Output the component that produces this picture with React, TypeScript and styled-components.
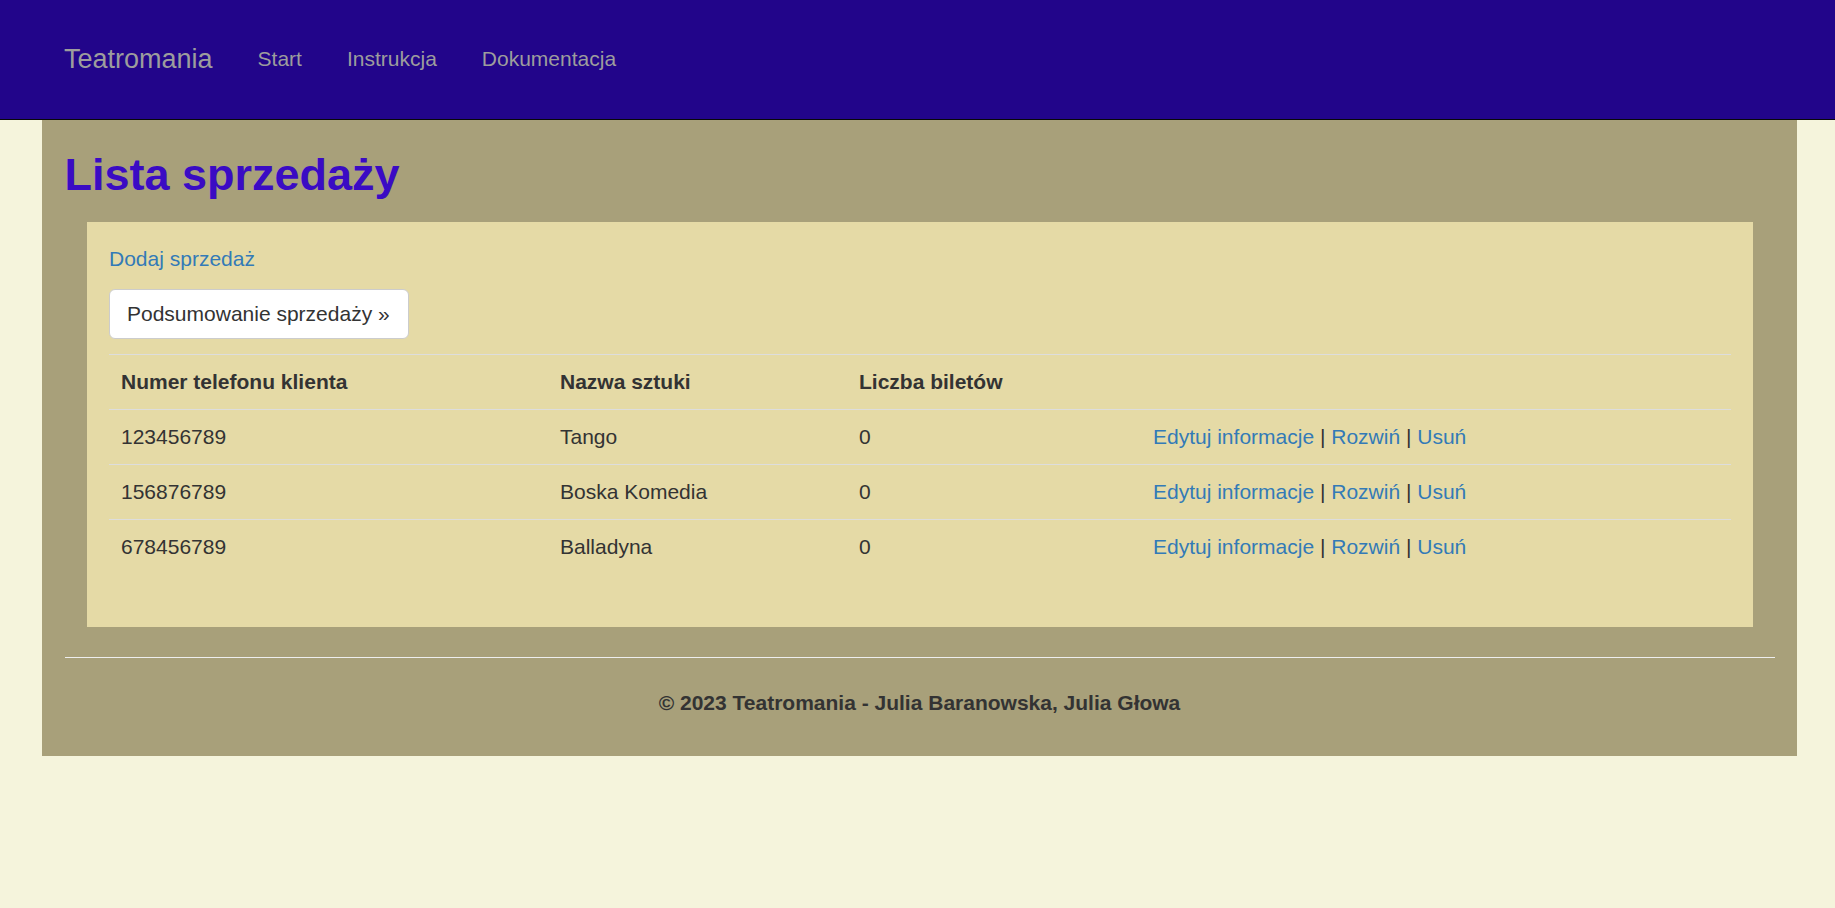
import React from "react";
import styled, { createGlobalStyle } from "styled-components";

const GlobalStyle = createGlobalStyle`
  html, body {
    margin: 0;
    padding: 0;
    background: #f5f4dc;
    font-family: Arial, "Liberation Sans", Helvetica, sans-serif;
    font-size: 21px;
    line-height: 30px;
    color: #333333;
  }
  * { box-sizing: border-box; }
`;

const NavBar = styled.nav`
  height: 120px;
  background: #22058a;
  border-bottom: 1px solid #080808;
  display: flex;
  align-items: center;
  padding: 0 0 2px 41.5px;
`;

const Brand = styled.a`
  font-size: 27px;
  color: #9d9d9d;
  padding: 0 22.5px;
  text-decoration: none;
`;

const NavLink = styled.a`
  font-size: 21px;
  color: #9d9d9d;
  padding: 0 22.5px;
  text-decoration: none;
`;

const Container = styled.main`
  width: 1755px;
  margin: 0 0 0 42px;
  background: #a8a07a;
  padding: 30px 22.5px 38px;
`;

const Title = styled.h1`
  margin: 0 0 22px;
  font-size: 45px;
  line-height: 49.5px;
  font-weight: bold;
  color: #3a0bc4;
`;

const Panel = styled.section`
  margin: 0 22px 0 22px;
  background: #e5daa6;
  padding: 22.5px 22px 22.5px 22.5px;
`;

const Para = styled.p`
  margin: 0 0 15px;
`;

const Link = styled.a`
  color: #337ab7;
  text-decoration: none;
`;

const Button = styled.a`
  display: inline-block;
  height: 50px;
  padding: 9px 18px 9px 17px;
  border: 1px solid #cccccc;
  border-radius: 6px;
  background: #ffffff;
  color: #333333;
  font-size: 21px;
  line-height: 30px;
  text-decoration: none;
`;

const Table = styled.table`
  width: 100%;
  border-collapse: collapse;
  border-spacing: 0;
  margin-bottom: 30px;
`;

const HeadCell = styled.th<{ $w?: number }>`
  text-align: left;
  font-weight: bold;
  padding: 12px;
  border-top: 1px solid #dddddd;
  ${(p) => (p.$w ? `width: ${p.$w}px;` : "")}
`;

const Cell = styled.td`
  padding: 12px;
  border-top: 1px solid #dddddd;
`;

const Sep = styled.span`
  color: #333333;
`;

const Rule = styled.hr`
  margin: 30px 0;
  border: 0;
  border-top: 1px solid #eeeeee;
`;

const Footer = styled.footer`
  text-align: center;
  font-weight: bold;
`;

const rows = [
  { phone: "123456789", play: "Tango", count: "0" },
  { phone: "156876789", play: "Boska Komedia", count: "0" },
  { phone: "678456789", play: "Balladyna", count: "0" },
];

export default function App() {
  return (
    <>
      <GlobalStyle />
      <NavBar>
        <Brand href="#">Teatromania</Brand>
        <NavLink href="#">Start</NavLink>
        <NavLink href="#">Instrukcja</NavLink>
        <NavLink href="#">Dokumentacja</NavLink>
      </NavBar>
      <Container>
        <Title>Lista sprzedaży</Title>
        <Panel>
          <Para>
            <Link href="#">Dodaj sprzedaż</Link>
          </Para>
          <Para>
            <Button href="#">Podsumowanie sprzedaży »</Button>
          </Para>
          <Table>
            <thead>
              <tr>
                <HeadCell $w={439}>Numer telefonu klienta</HeadCell>
                <HeadCell $w={299}>Nazwa sztuki</HeadCell>
                <HeadCell $w={294}>Liczba biletów</HeadCell>
                <HeadCell></HeadCell>
              </tr>
            </thead>
            <tbody>
              {rows.map((r) => (
                <tr key={r.phone}>
                  <Cell>{r.phone}</Cell>
                  <Cell>{r.play}</Cell>
                  <Cell>{r.count}</Cell>
                  <Cell>
                    <Link href="#">Edytuj informacje</Link> <Sep>|</Sep>{" "}
                    <Link href="#">Rozwiń</Link> <Sep>|</Sep>{" "}
                    <Link href="#">Usuń</Link>
                  </Cell>
                </tr>
              ))}
            </tbody>
          </Table>
        </Panel>
        <Rule />
        <Footer>© 2023 Teatromania - Julia Baranowska, Julia Głowa</Footer>
      </Container>
    </>
  );
}
